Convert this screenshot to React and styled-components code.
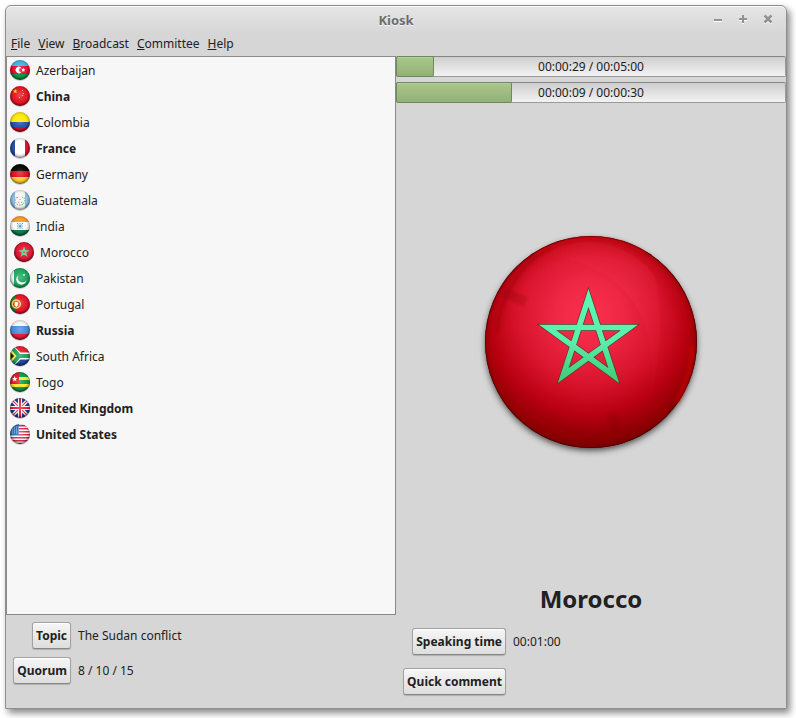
import React from "react";
import styled, { createGlobalStyle } from "styled-components";

const GlobalStyle = createGlobalStyle`
  *, *::before, *::after { box-sizing: border-box; }
  body {
    margin: 0;
    background: #fff;
    color: #212121;
    font: 12px/18px "Noto Sans", "Open Sans", sans-serif;
  }
  button { font: inherit; color: inherit; }
`;

const Window = styled.div`
  display: flex;
  flex-direction: column;
  min-height: calc(100vh - 14px);
  margin: 5px 9px 9px 5px;
  border: 1px solid #8e8e8e;
  border-radius: 6px 6px 0 0;
  background: linear-gradient(#e6e6e6, #d6d6d6 28px);
  box-shadow: inset 0 1px #fafafa, 3px 4px 7px rgba(0, 0, 0, 0.48);
`;

const TitleBar = styled.header`
  display: grid;
  grid-template-columns: 1fr auto 1fr;
  align-items: center;
  height: 28px;
  padding: 0 8px;
`;

const Title = styled.h1`
  grid-column: 2;
  margin: 0;
  color: #6d6d6d;
  font-size: 13px;
  line-height: 18px;
  text-shadow: 0 1px #f4f4f4;
`;

const WindowControls = styled.div`
  display: flex;
  justify-content: flex-end;
  gap: 5px;
`;

const ControlButton = styled.button`
  display: grid;
  place-items: center;
  width: 20px;
  height: 20px;
  padding: 0;
  border: 0;
  background: none;
  color: #929292;
  filter: drop-shadow(0 1px #fff);
`;

const MenuBar = styled.nav`
  display: flex;
  height: 22px;
`;

const MenuButton = styled.button`
  padding: 0 4px 2px;
  border: 0;
  background: none;
  line-height: 20px;

  &:first-child { padding-left: 5px; }
  &::first-letter { text-decoration: underline; }
`;

const Panes = styled.main`
  display: grid;
  grid-template-columns: 1fr 1fr;
  flex: 1;
`;

const Pane = styled.section`
  display: flex;
  flex-direction: column;
  min-width: 0;
`;

const CountryList = styled.ul`
  flex: 1;
  margin: 0;
  padding: 1px 3px 0;
  border: 1px solid #8a8a8a;
  background: #f7f7f7;
  list-style: none;
`;

const CountryRow = styled.li`
  display: flex;
  align-items: center;
  gap: 5px;
  height: 26px;
  padding-left: ${(p) => (p.$speaking ? "4px" : "0")};
  font-weight: ${(p) => (p.$strong ? 700 : 400)};
`;

const SessionInfo = styled.div`
  display: grid;
  grid-template-columns: 64px 1fr;
  align-items: center;
  justify-items: end;
  gap: 8px 7px;
  padding: 7px 0 24px 1px;
`;

const SpeakerActions = styled(SessionInfo)`
  grid-template-columns: 110px 1fr;
  row-gap: 13px;
  padding: 9px 0 13px;
`;

const InfoText = styled.span`
  justify-self: start;
`;

const PushButton = styled.button`
  height: 27px;
  padding: 0 3px;
  border: 1px solid #a2a2a2;
  border-bottom-color: #868686;
  border-radius: 3px;
  background: linear-gradient(#f6f6f6, #dedede);
  box-shadow: inset 0 1px #fff, 0 1px 1px rgba(0, 0, 0, 0.18);
  font-weight: 700;
  white-space: nowrap;
`;

const Timers = styled.div`
  display: grid;
  gap: 5px;
`;

const TimerTrack = styled.div`
  display: grid;
  height: 21px;
  border: 1px solid #9a9a9a;
  border-top-color: #858585;
  border-radius: 2px;
  background: linear-gradient(#cecece, #f3f3f3);

  & > * { grid-area: 1 / 1; }
`;

const TimerFill = styled.div`
  margin: -1px;
  border: 1px solid #6f8a59;
  border-radius: 2px;
  background: linear-gradient(#a9c78d, #92b176);
  box-shadow: inset 0 1px #b4cf9b;
`;

const TimerText = styled.span`
  justify-self: center;
  align-self: center;
  z-index: 1;
`;

const FlagStage = styled.div`
  display: grid;
  flex: 1;
  place-items: center;
`;

const SpeakerName = styled.h2`
  margin: 0;
  padding-bottom: 2px;
  font-size: 24px;
  line-height: 36px;
  text-align: center;
`;

const FlagIcon = styled.svg`
  flex: none;
  width: 21px;
  height: 22px;
`;

const starPath = (cx, cy, r, inner = 0.4) =>
  Array.from({ length: 10 }, (_, i) => {
    const a = (i * Math.PI) / 5 - Math.PI / 2;
    const d = i % 2 ? r * inner : r;
    return `${i ? "L" : "M"}${(cx + d * Math.cos(a)).toFixed(2)} ${(cy + d * Math.sin(a)).toFixed(2)}`;
  }).join("") + "Z";

const Band = ({ y, h, c }) => <rect x="0" y={y} width="20" height={h} fill={c} />;

const flagArt = {
  azerbaijan: (
    <>
      <Band y={0} h={6} c="#39b4e6" />
      <Band y={6} h={8} c="#e8052d" />
      <Band y={14} h={6} c="#089340" />
      <path d="M11 7.7A3.1 3.1 0 1 0 11 12.3A2.3 2.3 0 1 1 11 7.7Z" fill="#fff" stroke="#fff" strokeWidth=".5" />
      <path d={starPath(13.3, 10, 2, 0.6)} fill="#fff" />
    </>
  ),
  china: (
    <>
      <Band y={0} h={20} c="#e3101f" />
      <path d={starPath(5.2, 5.3, 2.5)} fill="#ffe500" />
      <path d="M12 4h1v1h-1zM13 7h1v1h-1zM12 9h1v1h-1zM9 11h1v1H9z" fill="#ffd21c" />
    </>
  ),
  colombia: (
    <>
      <Band y={0} h={10} c="#ffe800" />
      <Band y={10} h={5} c="#204ea8" />
      <Band y={15} h={5} c="#d00726" />
    </>
  ),
  france: (
    <>
      <Band y={0} h={20} c="#fff" />
      <rect width="5" height="20" fill="#20489f" />
      <rect x="15" width="5" height="20" fill="#df0927" />
    </>
  ),
  germany: (
    <>
      <Band y={0} h={7} c="#000" />
      <Band y={7} h={6} c="#e2061c" />
      <Band y={13} h={7} c="#ffcf35" />
    </>
  ),
  guatemala: (
    <>
      <Band y={0} h={20} c="#f7f7f5" />
      <rect width="5" height="20" fill="#8ebde6" />
      <rect x="15" width="5" height="20" fill="#8ebde6" />
      <path d="M6.6 7.2a4.7 4.7 0 1 0 6.9 0" fill="none" stroke="#6cbd83" strokeWidth="1.2" strokeDasharray="1.4 1" />
      <path d="M7 8l1.4-1M11.8 7l1.2.7M8 12l1.3.7M11 12.7l1.3-.7M9.5 9.6h1.2" stroke="#d66b65" />
    </>
  ),
  india: (
    <>
      <Band y={0} h={6} c="#f99a25" />
      <Band y={6} h={8} c="#f9f9f9" />
      <Band y={14} h={6} c="#087447" />
      <path d="M7 7l6 6M13 7l-6 6M10 7v6M7 10h6" stroke="#2689bd" strokeWidth="1" strokeDasharray="1.5 .6" />
    </>
  ),
  morocco: (
    <>
      <Band y={0} h={20} c="#de1230" />
      <path d="M10 6L12.5 13.6L6 8.9H14L7.5 13.6Z" fill="none" stroke="#50d080" strokeWidth="1.1" />
    </>
  ),
  pakistan: (
    <>
      <Band y={0} h={20} c="#17a75c" />
      <rect width="4" height="20" fill="#f8f8f8" />
      <path d="M8.3 7.2A5.2 5.2 0 1 0 16.5 12.2A4.7 4.7 0 0 1 8.3 7.2Z" fill="#fff" />
      <path d={starPath(14, 7, 1.5)} fill="#fff" />
    </>
  ),
  portugal: (
    <>
      <Band y={0} h={20} c="#e40d25" />
      <rect width="6" height="20" fill="#16833a" />
      <circle cx="6.3" cy="10" r="4" fill="#df2632" stroke="#f2e532" strokeWidth="1.4" />
      <path d="M2 7l8.2 6M10 6.8L2.5 13" stroke="#f2e532" strokeWidth=".7" />
      <path d="M4.3 7.5h4v3q0 2-2 2.8q-2-.8-2-2.8z" fill="#fff" stroke="#df2632" strokeWidth=".6" />
    </>
  ),
  russia: (
    <>
      <Band y={0} h={6} c="#f6f6f6" />
      <Band y={6} h={8} c="#4389dc" />
      <Band y={14} h={6} c="#df1530" />
    </>
  ),
  southAfrica: (
    <>
      <Band y={0} h={10} c="#e31b29" />
      <Band y={10} h={10} c="#1b3e98" />
      <path d="M-1 0L9 10L-1 20M9 10H20" fill="none" stroke="#fff" strokeWidth="7" />
      <path d="M-1 -2L9 10L-1 22V0M8 10H20" fill="none" stroke="#15a052" strokeWidth="4" />
      <path d="M0 5L5.2 10L0 15Z" fill="#171700" stroke="#f5df1c" strokeWidth="1.5" />
    </>
  ),
  togo: (
    <>
      <Band y={0} h={20} c="#079642" />
      <Band y={5} h={3} c="#f7e82a" />
      <Band y={12} h={3} c="#f7e82a" />
      <rect width="9" height="12" fill="#e4112d" />
      <path d={starPath(4.7, 7, 3)} fill="#fff" />
    </>
  ),
  unitedKingdom: (
    <>
      <Band y={0} h={20} c="#173991" />
      <path d="M0 0L20 20M20 0L0 20" stroke="#fff" strokeWidth="3.4" />
      <path d="M0 0L20 20M20 0L0 20" stroke="#e32843" strokeWidth="1.1" />
      <path d="M10 0V20M0 10H20" stroke="#fff" strokeWidth="4" />
      <path d="M10 0V20M0 10H20" stroke="#e41a32" strokeWidth="2" />
    </>
  ),
  unitedStates: (
    <>
      <Band y={0} h={20} c="#fff" />
      {[1, 4, 7, 10, 13, 16, 19].map((y) => (
        <Band key={y} y={y} h={1.5} c="#dc2848" />
      ))}
      <rect width="9" height="11" fill="#286aae" />
      <path d="M2 3H9M2 5H9M2 7H9M2 9H9" stroke="#acd6ec" strokeWidth=".9" strokeDasharray="1 1" />
    </>
  ),
};

function Flag({ code }) {
  return (
    <FlagIcon viewBox="0 0 21 22" aria-hidden="true">
      <defs>
        <clipPath id={`${code}-round`}>
          <circle cx="10" cy="10" r="10" />
        </clipPath>
        <radialGradient id={`${code}-edge`} cx=".5" cy=".46" r=".54">
          <stop offset=".1" stopColor="#fff" stopOpacity=".22" />
          <stop offset=".55" stopColor="#fff" stopOpacity=".04" />
          <stop offset=".8" stopColor="#000" stopOpacity=".16" />
          <stop offset="1" stopColor="#000" stopOpacity=".6" />
        </radialGradient>
      </defs>
      <circle cx="10" cy="11" r="10" fill="#000" opacity=".2" />
      <g clipPath={`url(#${code}-round)`}>{flagArt[code]}</g>
      <circle cx="10" cy="10" r="10" fill={`url(#${code}-edge)`} />
    </FlagIcon>
  );
}

function MoroccoSphere() {
  const star = "M118.5 77.8L143.8 155.6L77.6 107.5H159.4L93.2 155.6Z";
  return (
    <svg width="240" height="240" viewBox="1 2 240 240" role="img" aria-label="Flag of Morocco">
      <defs>
        <radialGradient id="sphere-body" gradientUnits="userSpaceOnUse" cx="119" cy="94" r="139">
          <stop offset="0" stopColor="#fd2f50" />
          <stop offset=".25" stopColor="#ed2744" />
          <stop offset=".5" stopColor="#d9142d" />
          <stop offset=".72" stopColor="#b90012" />
          <stop offset=".88" stopColor="#8c0004" />
          <stop offset="1" stopColor="#580000" />
        </radialGradient>
        <radialGradient id="sphere-rim" gradientUnits="userSpaceOnUse" cx="121" cy="122" r="106">
          <stop offset=".8" stopColor="#c00000" stopOpacity="0" />
          <stop offset=".94" stopColor="#a40000" stopOpacity=".25" />
          <stop offset=".985" stopColor="#8a0000" stopOpacity=".5" />
          <stop offset="1" stopColor="#3a0000" />
        </radialGradient>
        <linearGradient id="sphere-star" x1="0" y1="0" x2="0" y2="1">
          <stop offset="0" stopColor="#5df6b4" />
          <stop offset=".55" stopColor="#5aefad" />
          <stop offset="1" stopColor="#43cf80" />
        </linearGradient>
        <linearGradient id="sphere-light" x1="0" y1="0" x2="1" y2="1">
          <stop offset="0" stopColor="#ff4055" stopOpacity=".02" />
          <stop offset=".5" stopColor="#ff4a65" stopOpacity=".12" />
          <stop offset="1" stopColor="#ff4055" stopOpacity="0" />
        </linearGradient>
        <filter id="sphere-shadow" x="-10%" y="-10%" width="120%" height="120%">
          <feGaussianBlur stdDeviation="3.5" />
        </filter>
        <filter id="sphere-soft" x="-20%" y="-20%" width="140%" height="140%">
          <feGaussianBlur stdDeviation="1.3" />
        </filter>
      </defs>
      <circle cx="121" cy="125" r="105" fill="#000" opacity=".75" filter="url(#sphere-shadow)" />
      <circle cx="121" cy="122" r="106" fill="url(#sphere-body)" />
      <circle cx="121" cy="122" r="106" fill="url(#sphere-rim)" />
      <path d="M72 37C106 12 157 20 184 55C195 94 190 161 172 200C194 143 180 75 126 50C106 40 86 35 72 37Z" fill="url(#sphere-light)" />
      <g fill="none" filter="url(#sphere-soft)">
        <path d="M27 112C30 77 50 42 82 28" stroke="#920011" strokeWidth="4" opacity=".3" />
        <path d="M33 72L56 82" stroke="#820011" strokeWidth="9" opacity=".22" />
        <path d="M77 199C114 222 153 217 188 193" stroke="#8c0005" strokeWidth="3" opacity=".35" />
        <path d="M141 193L147 213" stroke="#7c0005" strokeWidth="11" opacity=".2" />
        <path d="M207 182C216 165 222 145 222 126" stroke="#d30505" strokeWidth="5" opacity=".45" />
        <path d="M66 34C100 13 143 12 175 33" stroke="#ff1010" strokeWidth="2" opacity=".4" />
      </g>
      <path d={star} fill="none" stroke="#65351f" strokeWidth="7" strokeMiterlimit="8" />
      <path d={star} fill="none" stroke="url(#sphere-star)" strokeWidth="5.6" strokeMiterlimit="8" />
    </svg>
  );
}

function Timer({ label, elapsed, total, text }) {
  return (
    <TimerTrack role="progressbar" aria-label={label} aria-valuemin={0} aria-valuemax={total} aria-valuenow={elapsed}>
      <TimerFill style={{ width: `${(elapsed / total) * 100}%` }} />
      <TimerText>{text}</TimerText>
    </TimerTrack>
  );
}

const countries = [
  { code: "azerbaijan", name: "Azerbaijan" },
  { code: "china", name: "China", strong: true },
  { code: "colombia", name: "Colombia" },
  { code: "france", name: "France", strong: true },
  { code: "germany", name: "Germany" },
  { code: "guatemala", name: "Guatemala" },
  { code: "india", name: "India" },
  { code: "morocco", name: "Morocco", speaking: true },
  { code: "pakistan", name: "Pakistan" },
  { code: "portugal", name: "Portugal" },
  { code: "russia", name: "Russia", strong: true },
  { code: "southAfrica", name: "South Africa" },
  { code: "togo", name: "Togo" },
  { code: "unitedKingdom", name: "United Kingdom", strong: true },
  { code: "unitedStates", name: "United States", strong: true },
];

const controls = [
  { label: "Minimize", d: "M1 6H9" },
  { label: "Maximize", d: "M1 5H9M5 1V9" },
  { label: "Close", d: "M1.5 1.5L8.5 8.5M8.5 1.5L1.5 8.5" },
];

export default function App() {
  return (
    <>
      <GlobalStyle />
      <Window>
        <TitleBar>
          <Title>Kiosk</Title>
          <WindowControls>
            {controls.map(({ label, d }) => (
              <ControlButton key={label} type="button" aria-label={label}>
                <svg width="10" height="12" viewBox="0 0 10 12">
                  <path d={d} stroke="currentColor" strokeWidth={label === "Close" ? 2.6 : 2} />
                </svg>
              </ControlButton>
            ))}
          </WindowControls>
        </TitleBar>
        <MenuBar aria-label="Main menu">
          {["File", "View", "Broadcast", "Committee", "Help"].map((item) => (
            <MenuButton key={item} type="button">{item}</MenuButton>
          ))}
        </MenuBar>
        <Panes>
          <Pane>
            <CountryList>
              {countries.map(({ code, name, strong, speaking }) => (
                <CountryRow key={code} $strong={strong} $speaking={speaking}>
                  <Flag code={code} />
                  {name}
                </CountryRow>
              ))}
            </CountryList>
            <SessionInfo>
              <PushButton type="button">Topic</PushButton>
              <InfoText>The Sudan conflict</InfoText>
              <PushButton type="button">Quorum</PushButton>
              <InfoText>8 / 10 / 15</InfoText>
            </SessionInfo>
          </Pane>
          <Pane>
            <Timers>
              <Timer label="Total time" elapsed={29} total={300} text="00:00:29 / 00:05:00" />
              <Timer label="Speaker time" elapsed={9} total={30} text="00:00:09 / 00:00:30" />
            </Timers>
            <FlagStage>
              <MoroccoSphere />
            </FlagStage>
            <SpeakerName>Morocco</SpeakerName>
            <SpeakerActions>
              <PushButton type="button">Speaking time</PushButton>
              <InfoText>00:01:00</InfoText>
              <PushButton type="button">Quick comment</PushButton>
            </SpeakerActions>
          </Pane>
        </Panes>
      </Window>
    </>
  );
}
